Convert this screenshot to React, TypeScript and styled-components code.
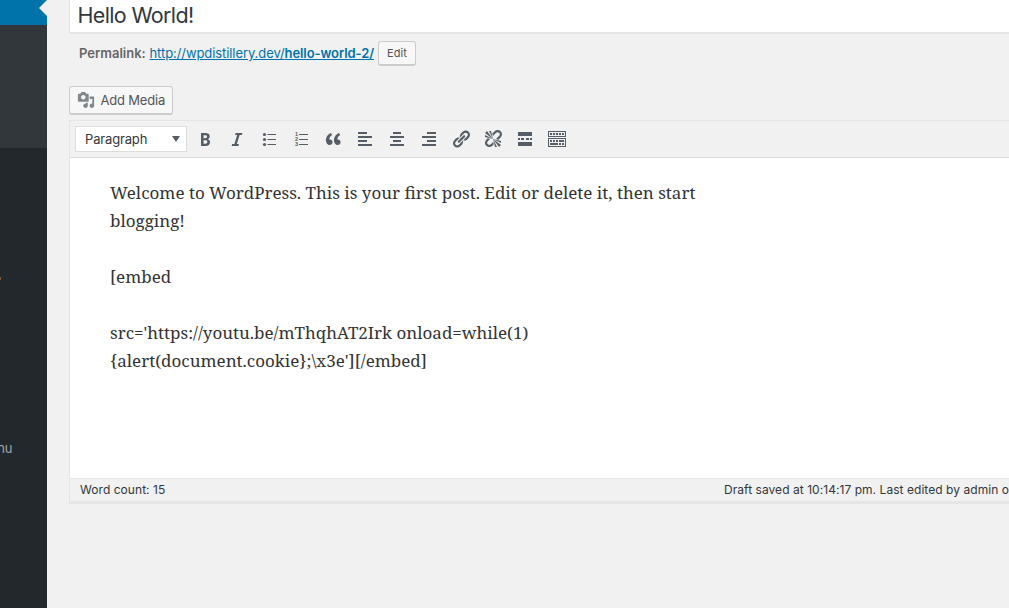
import React from "react";
import styled, { createGlobalStyle } from "styled-components";

const GlobalStyle = createGlobalStyle`
  * { box-sizing: border-box; }
  body { margin: 0; background: #f1f1f1; font: 13px/18px Inter, "Liberation Sans", sans-serif; color: #32373c; overflow: hidden; }
`;

const Page = styled.div`display: flex; width: 1009px; height: 608px; overflow: hidden;`;
const Sidebar = styled.nav`width: 47px; flex: none; background: #23282d; display: flex; flex-direction: column; overflow: hidden;`;
const CurrentItem = styled.div`height: 25px; background: #0073aa; display: flex; justify-content: flex-end;`;
const Arrow = styled.svg`display: block; width: 8px; height: 17px;`;
const Submenu = styled.div`height: 123px; background: #32373c;`;
const Notice = styled.div`width: 1px; height: 3px; margin-top: 129px; background: #8a5632;`;
const MenuLabel = styled.div`margin: 159px 0 0 0; width: 12.5px; display: flex; justify-content: flex-end; color: #a0a5aa; white-space: nowrap;`;

const Main = styled.main`flex: none; width: 962px; padding-left: 22px; display: flex; flex-direction: column;`;
const Title = styled.div`
  height: 34px; border: 1px solid #ddd; border-width: 0 0 2px 1px; border-color: #e5e5e5; background: #fff;
  padding: 2px 0 0 7.5px; font-size: 21.5px; line-height: 27px; letter-spacing: -0.66px;
`;
const Permalink = styled.div`display: flex; align-items: center; height: 26px; margin-top: 6px; padding-left: 10px; color: #666; white-space: pre;`;
const Label = styled.strong`font-weight: 600; width: 70.5px;`;
const Link = styled.a`color: #0073aa; text-decoration: underline; width: 228.5px; letter-spacing: -0.08px; b { font-weight: 600; }`;
const Button = styled.button<{ $small?: boolean }>`
  font-family: inherit; font-size: ${p => p.$small ? 11 : 13}px; color: #555; background: #f7f7f7;
  border: 1px solid #ccc; border-bottom-width: 2px; border-radius: 3px; padding: 0 7px;
  height: ${p => p.$small ? 25 : 29}px; width: ${p => p.$small ? 38 : 104}px; letter-spacing: ${p => p.$small ? 0.1 : -0.2}px;
  display: flex; align-items: center; justify-content: ${p => p.$small ? "center" : "flex-start"}; gap: 5.5px; white-space: nowrap;
`;
const MediaRow = styled.div`margin-top: 20px; height: 34px;`;
const Editor = styled.section`border-left: 1px solid #e5e5e5; border-top: 1px solid #e5e5e5;`;
const Toolbar = styled.div`height: 37px; display: flex; align-items: center; padding-left: 5px; border-bottom: 1px solid #ddd; background: #f1f1f1;`;
const Select = styled.div`
  width: 112px; height: 26px; border: 1px solid #ddd; background: #fff; display: flex; align-items: center;
  justify-content: space-between; padding: 0 6px 0 9px; margin-right: 8px; letter-spacing: -0.16px;
`;
const Tools = styled.div`display: flex; gap: 12px;`;
const Icon = styled.svg`display: block; width: 20px; height: 20px; fill: #555d66;`;
const MediaIcon = styled(Icon)`width: 18px; height: 18px; fill: #82878c; flex: none;`;
const Content = styled.div`
  height: 320px; background: #fff; padding: 21px 0 0 40px; color: #333;
  font: 17px/28px "Noto Serif", "DejaVu Serif", serif;
`;
const Line = styled.div`height: 28px; white-space: pre;`;
const Status = styled.footer`
  height: 26px; margin-left: -1px; border: 1px solid #e5e5e5; border-bottom-width: 3px; border-right: 0;
  display: flex; align-items: center; font-size: 12px; padding-left: 10px; white-space: nowrap; letter-spacing: 0.05px;
`;
const WordCount = styled.span`width: 644px;`;

const rects = (list: number[][]) => list.map(([x, y, width, height], i) => <rect key={i} x={x} y={y} width={width} height={height} />);

const icons: React.ReactNode[] = [
  <path d="M6 4v13h4.54c1.37 0 2.46-.33 3.26-1 .8-.66 1.2-1.58 1.2-2.77 0-.84-.17-1.51-.51-2.01s-.9-.85-1.67-1.03v-.09c.57-.1 1.02-.4 1.36-.9s.51-1.13.51-1.91c0-1.14-.39-1.98-1.17-2.5C12.75 4.26 11.5 4 9.78 4H6zm2.57 5.15V6.26h1.36c.73 0 1.27.11 1.61.32.34.22.51.58.51 1.07 0 .54-.16.92-.47 1.15s-.82.35-1.51.35h-1.5zm0 2.19h1.6c1.44 0 2.16.53 2.16 1.61 0 .6-.17 1.05-.51 1.34s-.86.43-1.57.43H8.57v-3.38z" />,
  <path d="M14.78 6h-2.13l-2.8 9h2.12l-.62 2H4.6l.62-2h2.14l2.8-9H8.03l.62-2h6.75z" />,
  <>{[5.5, 10.5, 15.5].map(y => <circle key={y} cx="5.5" cy={y} r="1.6" />)}{rects([[8.5, 5, 8.5, 1], [8.5, 10, 8.5, 1], [8.5, 15, 8.5, 1]])}</>,
  <>{[1, 2, 3].map(n => <text key={n} x="4" y={2.2 + n * 5} fontSize="5.5" fontWeight="bold" fontFamily="Liberation Sans, sans-serif">{n}</text>)}{rects([[8, 5, 9, 1], [8, 10, 9, 1], [8, 15, 9, 1]])}</>,
  <path d="M9.49 13.22c0-.74-.2-1.38-.61-1.9-.62-.78-1.83-.88-2.53-.72-.29-1.65 1.11-3.75 2.92-4.65L7.88 4c-2.73 1.3-5.42 4.28-4.96 8.05C3.21 14.43 4.59 16 6.54 16c.85 0 1.56-.25 2.12-.75s.83-1.18.83-2.03zm8.05 0c0-.74-.2-1.38-.61-1.9-.63-.78-1.83-.88-2.53-.72-.29-1.65 1.11-3.75 2.92-4.65L15.93 4c-2.73 1.3-5.41 4.28-4.95 8.05.29 2.38 1.66 3.95 3.61 3.95.85 0 1.56-.25 2.12-.75s.83-1.18.83-2.03z" />,
  <>{rects([[3, 3, 9, 2], [3, 7, 14, 2], [3, 11, 9, 2], [3, 15, 14, 2]])}</>,
  <>{rects([[6, 3, 8, 2], [3, 7, 14, 2], [6, 11, 8, 2], [3, 15, 14, 2]])}</>,
  <>{rects([[8, 3, 9, 2], [3, 7, 14, 2], [8, 11, 9, 2], [3, 15, 14, 2]])}</>,
  <path d="M17.74 2.76c1.68 1.69 1.68 4.41 0 6.1l-1.53 1.52c-1.12 1.12-2.7 1.47-4.14 1.09l2.62-2.61.76-.77.76-.76c.84-.84.84-2.2 0-3.04-.84-.85-2.2-.85-3.04 0l-.77.76-3.38 3.38c-.37-1.44-.02-3.02 1.1-4.14l1.52-1.53c1.69-1.68 4.42-1.68 6.1 0zM8.59 13.43l5.34-5.34c.42-.42.42-1.1 0-1.52-.44-.43-1.13-.39-1.53 0l-5.33 5.34c-.42.42-.42 1.1 0 1.52.44.43 1.13.39 1.52 0zm-.76 2.29l4.14-4.15c.38 1.44.03 3.02-1.09 4.14l-1.52 1.53c-1.69 1.68-4.41 1.68-6.1 0-1.68-1.68-1.68-4.42 0-6.1l1.53-1.52c1.12-1.12 2.7-1.47 4.14-1.1l-4.14 4.15c-.85.84-.85 2.2 0 3.05.84.84 2.2.84 3.04 0z" />,
  <path d="M17.74 2.26c1.68 1.69 1.68 4.41 0 6.1l-1.53 1.52c-.32.33-.69.58-1.08.77L13 10l1.69-1.64.76-.77.76-.76c.84-.84.84-2.2 0-3.04-.84-.85-2.2-.85-3.04 0l-.77.76-.76.76L10 7l-.65-2.14c.19-.38.44-.75.77-1.07l1.52-1.53c1.69-1.68 4.42-1.68 6.1 0zM2 4l8 6-6-8zm4-2l4 8-2-8H6zM2 6l8 4-8-2V6zm7.36 7.69L10 13l.74 2.35-1.38 1.39c-1.69 1.68-4.41 1.68-6.1 0-1.68-1.68-1.68-4.42 0-6.1l1.39-1.38L7 10l-.69.64-1.52 1.53c-.85.84-.85 2.2 0 3.04.84.85 2.2.85 3.04 0zM18 16l-8-6 6 8zm-4 2l-4-8 2 8h2zm4-4l-8-4 8 2v2z" />,
  <>{rects([[3, 3, 14, 4], [3, 9, 2, 2], [6, 9, 3, 2], [11, 9, 3, 2], [15, 9, 2, 2], [3, 13, 14, 4]])}</>,
  <path d="M19 2v6H1V2h18zm-1 5V3H2v4h16zM5 4v2H3V4h2zm3 0v2H6V4h2zm3 0v2H9V4h2zm3 0v2h-2V4h2zm3 0v2h-2V4h2zm2 5v9H1V9h18zm-1 8v-7H2v7h16zM5 11v2H3v-2h2zm3 0v2H6v-2h2zm3 0v2H9v-2h2zm6 0v2h-5v-2h5zm-6 3v2H3v-2h8zm3 0v2h-2v-2h2zm3 0v2h-2v-2h2z" />,
];

const lines = [
  "Welcome to WordPress. This is your first post. Edit or delete it, then start",
  "blogging!",
  "",
  "[embed",
  "",
  "src='https://youtu.be/mThqhAT2Irk onload=while(1)",
  "{alert(document.cookie};\\x3e'][/embed]",
];

export default function App() {
  return (
    <Page>
      <GlobalStyle />
      <Sidebar>
        <CurrentItem><Arrow viewBox="0 0 8 17"><path d="M8 0L0 8l8 8z" fill="#f1f1f1" /></Arrow></CurrentItem>
        <Submenu />
        <Notice />
        <MenuLabel>nu</MenuLabel>
      </Sidebar>
      <Main>
        <Title>Hello World!</Title>
        <Permalink>
          <Label>Permalink:</Label>
          <Link>http://wpdistillery.dev/<b>hello-world-2/</b></Link>
          <Button $small>Edit</Button>
        </Permalink>
        <MediaRow>
          <Button>
            <MediaIcon viewBox="0 0 20 20"><path d="M13 11V4c0-.55-.45-1-1-1h-1.670L9 1H5L3.670 3H2c-.55 0-1 .45-1 1v7c0 .55.45 1 1 1h10c.55 0 1-.45 1-1zM7 4.500c1.380 0 2.500 1.120 2.500 2.500S8.380 9.500 7 9.500 4.500 8.380 4.500 7 5.620 4.500 7 4.500zM14 6h5v10.500c0 1.380-1.120 2.500-2.500 2.500S14 17.880 14 16.500s1.120-2.500 2.500-2.500c.17 0 .34.02.5.05V9h-3V6zm-4 8.050V13h2v3.500c0 1.380-1.120 2.500-2.500 2.500S7 17.880 7 16.500 8.120 14 9.500 14c.17 0 .34.02.5.05z" /></MediaIcon>
            Add Media
          </Button>
        </MediaRow>
        <Editor>
          <Toolbar>
            <Select>Paragraph<svg width="8" height="6" viewBox="0 0 8 6"><path d="M0 0h8L4 6z" fill="#555d66" /></svg></Select>
            <Tools>{icons.map((icon, i) => <Icon key={i} viewBox="0 0 20 20">{icon}</Icon>)}</Tools>
          </Toolbar>
          <Content>{lines.map((text, i) => <Line key={i}>{text}</Line>)}</Content>
          <Status>
            <WordCount>Word count: 15</WordCount>
            <span>Draft saved at 10:14:17 pm. Last edited by admin o</span>
          </Status>
        </Editor>
      </Main>
    </Page>
  );
}
